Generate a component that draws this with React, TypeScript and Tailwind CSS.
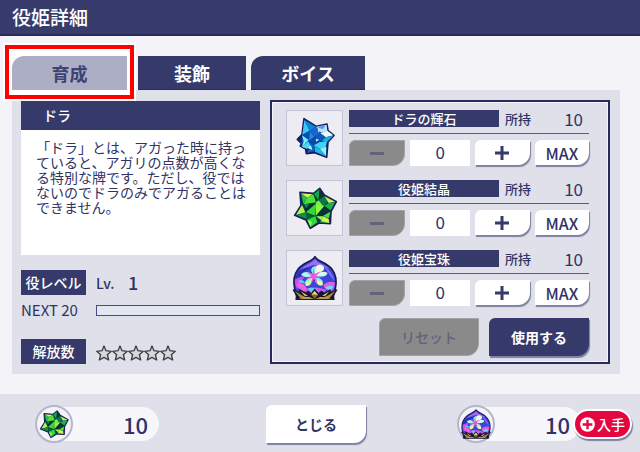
import { useState } from 'react';

const SHADOW = 'shadow-[1px_2px_1px_#7d80a0]';

function BlueGem({ className }: { className?: string }) {
  return (
    <svg viewBox="80 58 144 144" className={className} aria-hidden="true">
      <path d="M119 72L156 95L188 88L191 108L209 122L191 142L187 188L151 174L126 177L124 163L108 154L112 147L99 134L113 120Z" fill="#0d2f7c" stroke="#161c5a" strokeWidth="5" strokeLinejoin="round" />
      <path d="M120 76L114 120L136 108Z" fill="#3cc8f6" />
      <path d="M120 76L136 108L155 96Z" fill="#0c86d8" />
      <path d="M114 120L136 108L133 138L106 150L113 138Z" fill="#0a4fae" />
      <path d="M113 122L133 136L112 158L118 140Z" fill="#6ff0fb" />
      <path d="M136 108L155 96L168 116L150 126Z" fill="#1766cf" />
      <path d="M155 96L187 90L189 110L170 114Z" fill="#b8e2fc" />
      <path d="M158 98L184 91L176 104Z" fill="#5b95e8" />
      <path d="M168 116L189 108L207 122L184 128Z" fill="#e6fbff" />
      <path d="M184 128L207 123L188 142L172 138Z" fill="#21a8e8" />
      <path d="M150 126L168 116L184 128L164 142Z" fill="#0e58b8" />
      <path d="M136 110L150 126L134 138Z" fill="#1d8be8" />
      <path d="M134 138L150 126L162 142L148 152Z" fill="#0b4aa6" />
      <path d="M148 152L166 142L188 140L184 158L166 162Z" fill="#3fd3f6" />
      <path d="M166 162L186 156L185 185Z" fill="#8df3fd" />
      <path d="M150 154L166 162L184 185L152 171Z" fill="#1fb8ea" />
      <path d="M134 140L148 152L150 170L128 174L140 158Z" fill="#0f60c0" />
      <path d="M112 156L132 140L140 156L127 162Z" fill="#49d8f6" />
      <path d="M130 160L140 152L144 166Z" fill="#a9f7ff" />
      <path d="M160 104l8 3l-5 7zM154 132l10 3l-8 6z" fill="#c8f4ff" />
    </svg>
  );
}

function GreenGem({ className }: { className?: string }) {
  return (
    <svg viewBox="19 33 144 144" className={className} aria-hidden="true">
      <path d="M46 58L87 61L105 46L119 66L155 86L139 116L137 152L103 150L77 166L64 141L30 127L49 97Z" fill="#06413f" stroke="#1b1f55" strokeWidth="5" strokeLinejoin="round" />
      <path d="M49 61L84 64L68 74Z" fill="#d9f56a" />
      <path d="M50 63L68 74L56 92Z" fill="#22c64a" />
      <path d="M68 74L86 64L94 88L56 94Z" fill="#4be332" />
      <path d="M88 63L104 49L102 82Z" fill="#16a74a" />
      <path d="M105 50L118 68L102 82Z" fill="#05343a" />
      <path d="M94 88L102 82L116 98L92 100Z" fill="#7bf13c" />
      <path d="M102 82L119 69L134 84L116 98Z" fill="#0c7a48" />
      <path d="M120 70L151 86L132 90Z" fill="#c8f25c" />
      <path d="M134 90L151 88L138 112L118 98Z" fill="#1fb04c" />
      <path d="M56 94L92 92L64 118Z" fill="#062c38" />
      <path d="M92 93L92 128L64 118Z" fill="#34d836" />
      <path d="M92 98L120 98L94 128Z" fill="#8ef53e" />
      <path d="M52 96L62 118L34 126Z" fill="#b7f254" />
      <path d="M36 127L64 118L66 138Z" fill="#12913f" />
      <path d="M120 98L138 114L116 128L94 128Z" fill="#053238" />
      <path d="M64 120L92 130L68 140Z" fill="#0a5c42" />
      <path d="M68 140L92 130L98 148L78 162Z" fill="#2dda3a" />
      <path d="M68 141L82 146L78 162Z" fill="#9df352" />
      <path d="M94 130L116 130L110 142Z" fill="#a4f648" />
      <path d="M116 128L137 116L132 136Z" fill="#4fe239" />
      <path d="M116 130L132 138L134 150L108 146Z" fill="#d4f264" />
      <path d="M110 144L134 150L104 148Z" fill="#2bbd45" />
      <path d="M58 94L74 92L64 106Z" fill="#109049" />
    </svg>
  );
}

function Orb({ className }: { className?: string }) {
  return (
    <svg viewBox="15 22 144 144" className={className} aria-hidden="true">
      <path d="M87 30C95 46 122 46 138 68C150 84 152 108 148 126L140 156H34L26 126C22 108 24 84 36 68C52 46 79 46 87 30Z" fill="#3a46d8" stroke="#1a1b56" strokeWidth="5" strokeLinejoin="round" />
      <path d="M87 36C94 50 116 52 130 66C112 58 94 60 84 54C70 60 52 62 42 72C52 54 80 50 87 36Z" fill="#a06cf0" />
      <path d="M40 74C54 62 68 64 78 62C66 72 50 72 44 88C38 94 32 96 28 96C30 88 34 80 40 74Z" fill="#2334b0" />
      <path d="M112 58C128 64 142 84 146 104C134 92 126 74 112 58Z" fill="#7d6cf4" />
      <path d="M27 98C36 94 44 88 54 92C48 100 42 116 34 128C28 120 26 108 27 98Z" fill="#c94cf0" />
      <path d="M32 112C42 104 58 112 62 126L54 136C46 128 36 128 32 112Z" fill="#f062dc" />
      <path d="M36 104C46 96 54 102 58 112C50 108 42 110 36 104Z" fill="#54d8ee" />
      <path d="M112 116C124 104 138 104 147 108C146 120 142 130 136 134C126 136 116 128 112 116Z" fill="#e45be6" />
      <path d="M118 122C128 116 138 116 142 122C136 130 126 132 118 122Z" fill="#5fe0f0" />
      <path d="M56 128C70 120 104 120 120 130L116 142H60Z" fill="#d456ec" />
      <path d="M66 126C78 120 92 126 98 134L78 140Z" fill="#58d2f2" />
      <path d="M84 86C70 70 78 58 90 60C98 50 116 54 114 68C108 78 94 80 84 86Z" fill="#eefbe8" />
      <path d="M84 86C70 70 78 58 90 60C88 68 88 76 84 86Z" fill="#8cecf4" />
      <path d="M88 88C96 76 112 72 124 78C124 90 104 92 88 88Z" fill="#d4f9f0" />
      <path d="M82 88C68 70 50 76 46 84C54 94 70 92 82 88Z" fill="#b2f4ee" />
      <path d="M80 92C66 94 52 108 60 118C74 120 80 106 80 92Z" fill="#e6f8a4" />
      <path d="M80 92C66 94 58 102 56 108C66 106 74 102 80 92Z" fill="#86f0d8" />
      <path d="M86 94C98 92 114 102 110 116C98 120 86 108 86 94Z" fill="#f1f9b4" />
      <path d="M86 94C98 92 108 98 111 106C102 106 92 102 86 94Z" fill="#8ef3e8" />
      <path d="M82 64L86 82L104 74L90 88L108 94L90 94L96 114L84 96L72 116L79 94L58 98L76 88L60 76L80 84Z" fill="#ee58dc" />
      <path d="M22 130L40 138L42 130L60 140L66 134L76 142L86 128L98 142L106 134L114 140L132 130L134 138L152 130L142 146L144 158H30L32 146Z" fill="#17142c" stroke="#1a1b40" strokeWidth="4" strokeLinejoin="round" />
      <path d="M26 133L46 145L66 155H44ZM148 133L128 145L108 155H130Z" fill="#b98f34" />
      <path d="M44 134L66 148L56 147ZM130 134L108 148L118 147Z" fill="#f0d878" />
      <path d="M86 133L96 145L86 156L76 145Z" fill="#8a6a1e" />
      <path d="M86 133L96 145L86 143L76 145Z" fill="#f3db72" />
      <path d="M36 156L68 151L86 157L104 151L138 156Z" fill="#e2bf58" />
    </svg>
  );
}

const TABS = [
  { label: '育成', wrap: 'w-[115px] mr-[11px]', shape: 'rounded-tl-xl' },
  { label: '装飾', wrap: 'w-[108px] mr-[5px]', shape: '' },
  { label: 'ボイス', wrap: 'w-[114px]', shape: 'rounded-tl-xl' },
];

const ITEMS = [
  { name: 'ドラの輝石', owned: 10, Icon: BlueGem },
  { name: '役姫結晶', owned: 10, Icon: GreenGem },
  { name: '役姫宝珠', owned: 10, Icon: Orb },
];

function ItemRow({ item, value, onChange }: { item: (typeof ITEMS)[number]; value: number; onChange: (n: number) => void }) {
  const { name, owned, Icon } = item;
  return (
    <li className="flex h-14 gap-1.5">
      <div className="flex w-[57px] shrink-0 items-center justify-center border border-[#c3c5d6] bg-[#ececf2]">
        <Icon className="size-12" />
      </div>
      <div className="flex min-w-0 flex-1 flex-col justify-between">
        <div className="flex h-6 items-start border-b border-[#565b8c]">
          <h3 className="h-[17px] flex-1 bg-[#363a6b] text-center text-[13px] leading-[17px] font-medium text-white">{name}</h3>
          <span className="w-9 pl-1.5 text-[13px] leading-[17px] font-medium">所持</span>
          <span className="w-[54px] pr-1.5 text-right text-[17px] leading-[18px]">{owned}</span>
        </div>
        <div className="flex h-[26px] gap-[5px]">
          <button
            type="button"
            aria-label={`${name}を減らす`}
            disabled={value === 0}
            onClick={() => onChange(value - 1)}
            className="flex flex-1 items-center justify-center rounded-tl-md rounded-br-xl border border-[#a2a2a8] bg-[#8a8a8a]"
          >
            <span className="h-[3px] w-3.5 bg-[#62627c]" />
          </button>
          <input
            aria-label={`${name}の使用数`}
            inputMode="numeric"
            value={value}
            onChange={(e) => onChange(Math.min(owned, Number(e.target.value) || 0))}
            className="w-[60px] bg-white pb-0.5 text-center text-[17px] leading-6 outline-none"
          />
          <button
            type="button"
            aria-label={`${name}を増やす`}
            onClick={() => onChange(Math.min(owned, value + 1))}
            className={`mb-px flex flex-1 items-center justify-center rounded-tl-md rounded-br-xl bg-white ${SHADOW}`}
          >
            <svg viewBox="0 0 14 14" className="size-3.5" aria-hidden="true">
              <path d="M7 0V14M0 7H14" stroke="#363a6b" strokeWidth="3" />
            </svg>
          </button>
          <button
            type="button"
            onClick={() => onChange(owned)}
            className={`mb-px flex-1 rounded-tl-md rounded-br-xl bg-white text-base leading-6 font-medium ${SHADOW}`}
          >
            MAX
          </button>
        </div>
      </div>
    </li>
  );
}

function Star() {
  return (
    <svg viewBox="0 0 48 48" className="size-4" aria-hidden="true">
      <path d="M24 3L30 17L46 19L34 29L38 45L24 37L10 45L14 29L2 19L18 17Z" fill="#d5d7d8" stroke="#3c3c42" strokeWidth="4" strokeLinejoin="round" />
    </svg>
  );
}

function Stock({ Icon, amount }: { Icon: typeof Orb; amount: number }) {
  return (
    <div className="flex w-[124px] items-center rounded-full bg-[#f6f6fb]">
      <div className="-my-0.5 flex size-[38px] items-center justify-center rounded-full border-2 border-[#b4b5cc] bg-[#f3f3f8]">
        <Icon className="size-8" />
      </div>
      <span className="flex-1 pr-[11px] text-right text-[22px] leading-[34px] font-medium">{amount}</span>
    </div>
  );
}

export default function App() {
  const [tab, setTab] = useState(0);
  const [counts, setCounts] = useState([0, 0, 0]);

  return (
    <div className="flex min-h-screen flex-col bg-[#f3f3f8] font-['Noto_Sans_CJK_JP',sans-serif] text-[#2f3366]">
      <header className="h-9 border-b-2 border-[#262a5c] bg-[#383c6d] px-3">
        <h1 className="text-[19px] leading-[34px] font-medium text-white">役姫詳細</h1>
      </header>

      <main className="px-3 pt-5 pr-5 pb-5">
        <div role="tablist" className="flex">
          {TABS.map((t, i) => (
            <div key={t.label} className={`relative z-10 ${t.wrap}`}>
              {/* highlight frame */}
              {i === 0 && (
                <div className="pointer-events-none absolute -inset-x-[7px] -top-[11px] -bottom-[9px] border-4 border-[#ff0000] bg-white outline-2 outline-white" />
              )}
              <button
                type="button"
                role="tab"
                aria-selected={tab === i}
                onClick={() => setTab(i)}
                className={`relative h-[34px] w-full text-lg leading-8 font-bold ${t.shape} ${
                  tab === i ? 'bg-[#acaec5] text-[#3f4373]' : 'border-b border-[#262a5c] bg-[#363a6b] text-white'
                }`}
              >
                {t.label}
              </button>
            </div>
          ))}
        </div>

        <div className="grid grid-cols-[239fr_340fr] gap-2.5 bg-[#dfe0e9] py-2.5 pr-2.5 pl-[9px]">
          <section className="flex min-w-0 flex-col">
            <h2 className="mt-px h-[29px] bg-[#363a6b] pl-[22px] text-[14px] leading-[29px] font-medium text-white">ドラ</h2>
            <p className="h-[125px] bg-white pt-2.5 pr-3 pl-[15px] text-[14px] leading-[15px]">
              「ドラ」とは、アガった時に持っていると、アガリの点数が高くなる特別な牌です。ただし、役ではないのでドラのみでアガることはできません。
            </p>

            <div className="mt-[15px] flex h-[25px] items-center">
              <h3 className="w-[65px] bg-[#363a6b] text-center text-[14px] leading-[25px] font-medium text-white">役レベル</h3>
              <span className="ml-2.5 w-8 text-[14px] leading-6 font-medium">Lv.</span>
              <span className="pb-0.5 text-lg leading-6 font-medium">1</span>
            </div>
            <div className="mt-1.5 flex h-[18px] items-center">
              <span className="w-[75px] text-[15px] leading-[18px] whitespace-nowrap">NEXT 20</span>
              <div role="progressbar" aria-label="NEXT" aria-valuenow={0} className="h-[11px] flex-1 border border-[#474b85] bg-[#e2e6f1]" />
            </div>
            <div className="mt-5 flex h-[25px] items-center">
              <h3 className="w-[65px] bg-[#363a6b] text-center text-[14px] leading-[25px] font-medium text-white">解放数</h3>
              <div className="ml-2.5 flex pt-0.5">
                {[0, 1, 2, 3, 4].map((n) => (
                  <Star key={n} />
                ))}
              </div>
            </div>
          </section>

          <section className="min-w-0 border-2 border-[#262a5c] pt-2 pr-[19px] pb-1.5 pl-3.5 inset-ring inset-ring-[#f4f4fa]">
            <ul className="flex flex-col gap-3.5">
              {ITEMS.map((item, i) => (
                <ItemRow
                  key={item.name}
                  item={item}
                  value={counts[i]}
                  onChange={(n) => setCounts(counts.map((c, j) => (j === i ? n : c)))}
                />
              ))}
            </ul>
            <div className="mt-3 flex justify-end gap-2.5">
              <button
                type="button"
                onClick={() => setCounts([0, 0, 0])}
                className="h-[38px] w-[100px] rounded-tl-md rounded-br-xl border border-[#a2a2a8] bg-[#8a8a8a] text-[14px] font-medium text-[#62627c]"
              >
                リセット
              </button>
              <button
                type="button"
                className={`h-[38px] w-[100px] rounded-tl-md rounded-br-xl bg-[#363a6b] text-[14px] font-bold text-white ${SHADOW}`}
              >
                使用する
              </button>
            </div>
          </section>
        </div>
      </main>

      <footer className="flex flex-1 items-center justify-between bg-[#dfe0e9] pt-0.5 pr-2 pl-[35px]">
        <Stock Icon={GreenGem} amount={10} />
        <button
          type="button"
          className={`ml-4 h-[38px] w-[100px] rounded-tl-md rounded-br-xl bg-white text-[14px] font-bold ${SHADOW}`}
        >
          とじる
        </button>
        <div className="flex items-center">
          <Stock Icon={Orb} amount={10} />
          <button
            type="button"
            className={`-ml-2 flex h-[30px] w-[59px] items-center justify-center gap-0.5 rounded-full border-2 border-white bg-[#e3063f] text-[14px] font-medium text-white ${SHADOW}`}
          >
            <svg viewBox="0 0 45 45" className="size-[15px]" aria-hidden="true">
              <circle cx="22.5" cy="22.5" r="22" fill="#fff" />
              <path d="M22.5 8V37M8 22.5H37" stroke="#e3063f" strokeWidth="7" />
            </svg>
            入手
          </button>
        </div>
      </footer>
    </div>
  );
}
